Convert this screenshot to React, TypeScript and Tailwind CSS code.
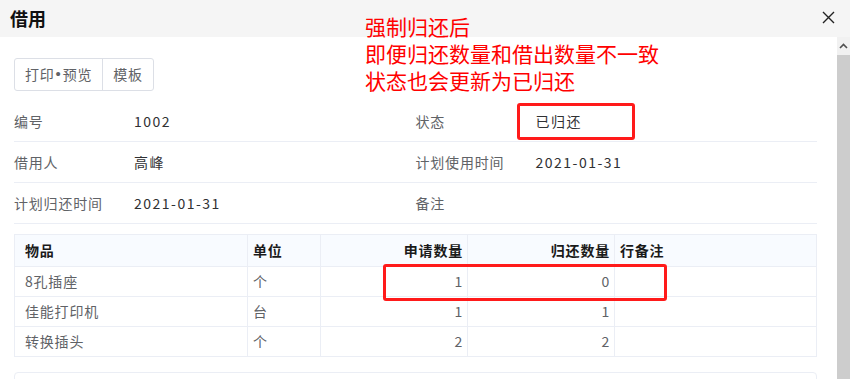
const font = { fontFamily: '"Noto Sans CJK SC", "Noto Sans", sans-serif' };

const info = [
  ["编号", "1002", "状态", "已归还"],
  ["借用人", "高峰", "计划使用时间", "2021-01-31"],
  ["计划归还时间", "2021-01-31", "备注", ""],
];

const rows = [
  ["8孔插座", "个", "1", "0", ""],
  ["佳能打印机", "台", "1", "1", ""],
  ["转换插头", "个", "2", "2", ""],
];

const App = () => {
  return (
    <div
      className="relative w-[850px] h-[379px] overflow-hidden bg-white text-[14px] tracking-[0.8px]"
      style={font}
    >
      {/* header */}
      <div className="h-[37px] bg-[#f5f5f5] flex items-center justify-between pl-[10px] pr-[15px]">
        <span className="text-[18px] font-bold tracking-normal text-[#111]">借用</span>
        <svg width="13" height="13" viewBox="0 0 13 13" className="mt-[-3px]">
          <path d="M1 1L12 12M12 1L1 12" stroke="#222" strokeWidth="1.4" />
        </svg>
      </div>

      <div className="flex h-[342px]">
        <div className="flex-1 pl-[14px] pr-[20px] pt-[21px]">
          {/* buttons */}
          <div className="inline-flex h-[33px] border border-[#dcdfe6] rounded-[3px] text-[#606266]">
            <div className="px-[10px] flex items-center border-r border-[#dcdfe6]">
              打印<span className="font-['Liberation_Sans'] text-[15px] px-[1px]">•</span>预览
            </div>
            <div className="px-[10px] flex items-center">模板</div>
          </div>

          {/* info */}
          <div className="mt-[10px]">
            {info.map((r, i) => (
              <div key={i} className="grid grid-cols-2 h-[41px] border-b border-[#ebeef5]">
                <div className="flex items-center">
                  <span className="w-[120px] text-[#606266]">{r[0]}</span>
                  <span className="text-[#303133] tracking-[1.5px]">{r[1]}</span>
                </div>
                <div className="flex items-center">
                  <span className="w-[120px] text-[#606266]">{r[2]}</span>
                  <span className="text-[#303133] tracking-[1.5px]">{r[3]}</span>
                </div>
              </div>
            ))}
          </div>

          {/* table */}
          <table className="mt-[10px] w-[803px] border-collapse table-fixed">
            <colgroup>
              <col className="w-[233px]" />
              <col className="w-[73px]" />
              <col className="w-[147px]" />
              <col className="w-[147px]" />
              <col />
            </colgroup>
            <thead>
              <tr className="h-[32px] bg-[#f8fbff] text-[#1a1a1a]">
                <th className="border border-[#ebeef5] text-left pl-[10px] font-bold">物品</th>
                <th className="border border-[#ebeef5] text-left pl-[5px] font-bold">单位</th>
                <th className="border border-[#ebeef5] text-right pr-[4px] font-bold">申请数量</th>
                <th className="border border-[#ebeef5] text-right pr-[4px] font-bold">归还数量</th>
                <th className="border border-[#ebeef5] text-left pl-[5px] font-bold">行备注</th>
              </tr>
            </thead>
            <tbody className="text-[#606266]">
              {rows.map((r, i) => (
                <tr key={i} className="h-[30px]">
                  <td className="border border-[#ebeef5] pl-[10px]">{r[0]}</td>
                  <td className="border border-[#ebeef5] pl-[5px]">{r[1]}</td>
                  <td className="border border-[#ebeef5] text-right pr-[4px]">{r[2]}</td>
                  <td className="border border-[#ebeef5] text-right pr-[4px]">{r[3]}</td>
                  <td className="border border-[#ebeef5] pl-[5px]">{r[4]}</td>
                </tr>
              ))}
            </tbody>
          </table>

          <div className="mt-[15px] h-[40px] border border-[#ebeef5] rounded-[4px]" />
        </div>

        {/* scrollbar */}
        <div className="w-[13px] flex flex-col">
          <div className="h-[18px] bg-[#f1f1f1] flex items-center justify-center">
            <svg width="9" height="6" viewBox="0 0 9 6">
              <path d="M1 5L4.5 1.5L8 5" stroke="#505050" strokeWidth="1.6" fill="none" />
            </svg>
          </div>
          <div className="flex-1 bg-[#cdcdcd]" />
        </div>
      </div>

      {/* annotations */}
      <div className="absolute left-[365px] top-[13px] text-[21px] leading-[27px] tracking-normal text-[#ff0000]">
        <div>强制归还后</div>
        <div>即便归还数量和借出数量不一致</div>
        <div>状态也会更新为已归还</div>
      </div>
      <div className="absolute left-[517px] top-[103px] w-[118px] h-[37px] border-[3px] border-[#ff1a1a] rounded-[3px]" />
      <div className="absolute left-[383px] top-[264px] w-[284px] h-[37px] border-[3px] border-[#ff1a1a] rounded-[3px]" />
    </div>
  );
};

export default App;
